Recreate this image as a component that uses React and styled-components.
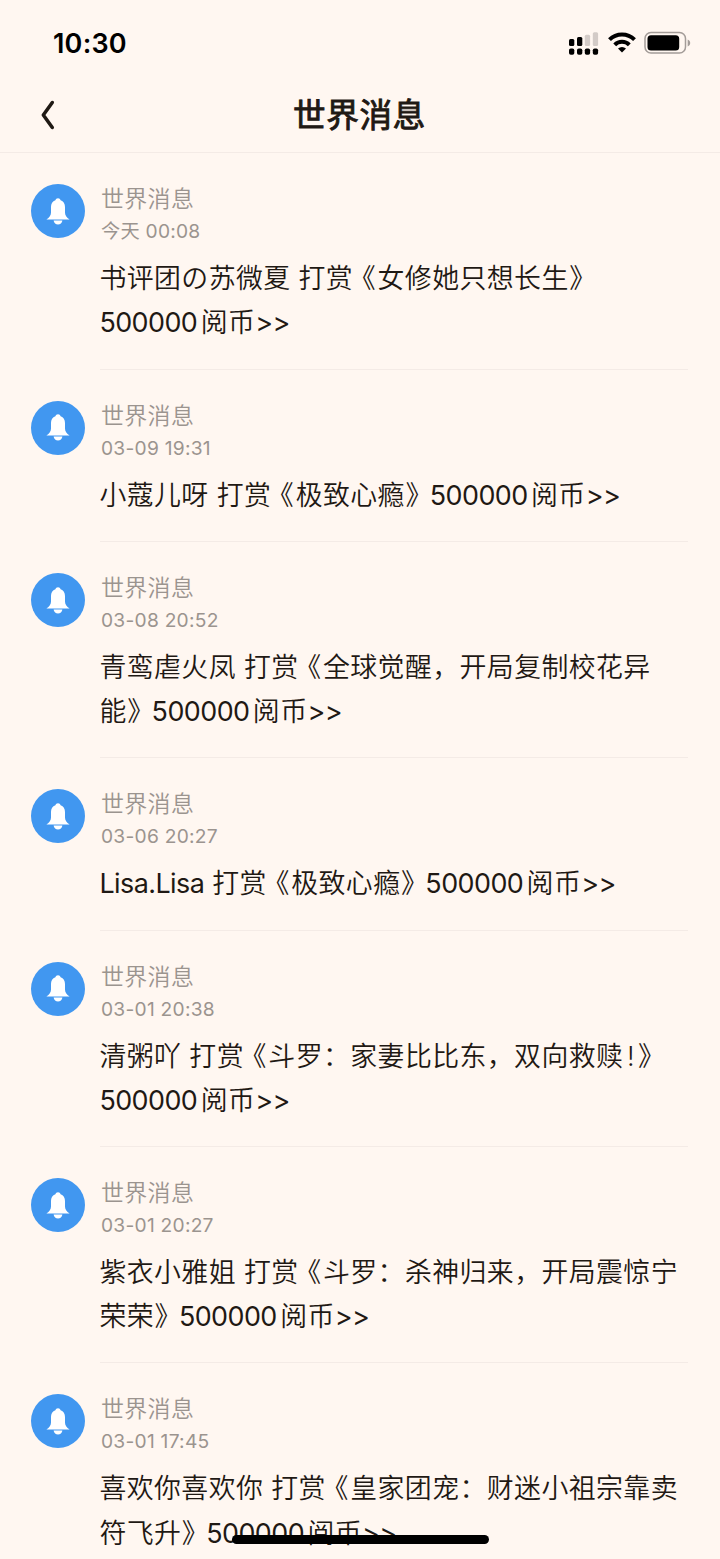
import React from "react";
import styled, { createGlobalStyle } from "styled-components";

const palette = {
  page: "#fff7f1",
  ink: "#1f1914",
  muted: "#9b948f",
  line: "#f4ebe6",
  blue: "#4197f0",
};

const GlobalStyle = createGlobalStyle`
  * {
    box-sizing: border-box;
  }

  body {
    margin: 0;
    background: ${palette.page};
    font-family: "Inter", "Noto Sans CJK SC", sans-serif;
    text-spacing-trim: space-all;
    text-autospace: no-autospace;
  }
`;

const Screen = styled.div`
  position: relative;
  width: 720px;
  height: 1559px;
  overflow: hidden;
  background: ${palette.page};
`;

const StatusBar = styled.div`
  display: flex;
  align-items: center;
  justify-content: space-between;
  height: 78px;
  padding: 8px 29px 0 53px;
`;

const Clock = styled.span`
  padding-top: 2px;
  font-size: 27px;
  font-weight: 600;
  line-height: 34px;
  letter-spacing: 0.2px;
  color: #000;
`;

const StatusIcons = styled.svg`
  display: block;
  width: 122px;
  height: 24px;
`;

const NavBar = styled.header`
  display: grid;
  grid-template-columns: 96px 1fr 96px;
  align-items: center;
  height: 75px;
  border-bottom: 1px solid ${palette.line};
`;

const BackButton = styled.button`
  display: flex;
  width: 96px;
  height: 74px;
  padding: 0 0 0 38px;
  align-items: center;
  border: 0;
  background: none;
`;

const Title = styled.h1`
  margin: 0 1px 0 0;
  font-size: 32.6px;
  font-weight: 400;
  line-height: 74px;
  letter-spacing: 0.7px;
  text-align: center;
  color: ${palette.ink};
  -webkit-text-stroke: 0.9px ${palette.ink};
`;

const List = styled.ul`
  margin: 0;
  padding: 0.4px 0 0;
  list-style: none;
`;

const Item = styled.li`
  display: flex;
  padding: 31px 32px 0 31px;
`;

const Avatar = styled.div`
  display: flex;
  flex: none;
  align-items: center;
  justify-content: center;
  width: 54px;
  height: 54px;
  margin-right: 15px;
  border-radius: 50%;
  background: ${palette.blue};
`;

const Content = styled.div`
  flex: 1;
  min-width: 0;
  border-bottom: 1px solid ${palette.line};
`;

const Name = styled.div`
  padding: 1px 0 0 1px;
  font-size: 23px;
  font-weight: 350;
  line-height: 29px;
  letter-spacing: 0.3px;
  color: ${palette.muted};
`;

const Time = styled.div`
  margin-top: 3px;
  padding-left: 1px;
  font-size: 19.2px;
  line-height: 28px;
  letter-spacing: 0.25px;
  color: ${palette.muted};
`;

const Message = styled.p`
  margin: 0 0 0 -0.6px;
  padding: 11px 0 24.2px;
  font-size: 26.9px;
  font-weight: 350;
  line-height: 44.1px;
  letter-spacing: 0.42px;
  color: ${palette.ink};
`;

const Line = styled.span`
  display: block;
  white-space: nowrap;
`;

const Latin = styled.span`
  margin-right: ${({ $gap }) => $gap || 0}px;
  font-weight: 400;
  letter-spacing: -0.55px;
`;

const Mark = styled.span`
  margin-left: ${({ $before }) => $before}px;
  margin-right: ${({ $after }) => $after || 0}px;
  font-feature-settings: "halt";
`;

const HomeIndicator = styled.div`
  position: absolute;
  left: 232px;
  top: 1535px;
  width: 257px;
  height: 9px;
  border-radius: 5px;
  background: #000;
`;

const messages = [
  { time: "今天 00:08", lines: ["书评团の苏微夏 打赏《女修她只想长生》", "500000阅币>>"] },
  { time: "03-09 19:31", lines: ["小蔻儿呀 打赏《极致心瘾》500000阅币>>"] },
  { time: "03-08 20:52", lines: ["青鸾虐火凤 打赏《全球觉醒，开局复制校花异", "能》500000阅币>>"] },
  { time: "03-06 20:27", lines: ["Lisa.Lisa 打赏《极致心瘾》500000阅币>>"] },
  { time: "03-01 20:38", lines: ["清粥吖 打赏《斗罗：家妻比比东，双向救赎!》", "500000阅币>>"] },
  { time: "03-01 20:27", lines: ["紫衣小雅姐 打赏《斗罗：杀神归来，开局震惊宁", "荣荣》500000阅币>>"] },
  { time: "03-01 17:45", lines: ["喜欢你喜欢你 打赏《皇家团宠：财迷小祖宗靠卖", "符飞升》500000阅币>>"] },
];

// tightens latin runs and book title marks against the chinese text
const renderText = (text) =>
  text.split(/([A-Za-z.]+|\d+|>>|[《》!])/).map((part, i) => {
    if (/^\d+$/.test(part)) return <Latin key={i} $gap={3.4}>{part}</Latin>;
    if (/^([A-Za-z.]+|>>)$/.test(part)) return <Latin key={i}>{part}</Latin>;
    if (part === "《") return <Mark key={i} $before={9} $after={1.5}>{part}</Mark>;
    if (part === "》") return <Mark key={i} $before={0.5} $after={10.5}>{part}</Mark>;
    if (part === "!") return <Mark key={i} $before={3.5} $after={2.5}>{part}</Mark>;
    return part;
  });

const BellIcon = () => (
  <svg width="24" height="27" viewBox="0 0 24 27" fill="#fff">
    <path d="M12 .2c1.300 0 2.300.9 2.600 2 2.900 1.100 4.400 3.500 4.400 6.800v5.500c0 2.800 1.500 4.900 4.600 7H.4c3.100-2.100 4.600-4.200 4.600-7V9c0-3.300 1.500-5.700 4.400-6.800C9.700 1.100 10.700.2 12 .2Z" />
    <path d="M7.600 22.500h8.800c-.5 2.500-2.100 4-4.400 4s-3.900-1.500-4.400-4Z" />
  </svg>
);

const Status = () => (
  <StatusIcons viewBox="0 0 122 24">
    <g fill="#000">
      <rect x="0" y="8" width="5.300" height="7" rx="1.500" />
      <rect x="8" y="6" width="5.300" height="9" rx="1.500" />
      <rect x="0" y="17.500" width="5.300" height="6.200" rx="1.800" />
      <rect x="8" y="17.500" width="5.300" height="6.200" rx="1.800" />
      <rect x="15.800" y="17.500" width="5.300" height="6.200" rx="1.800" />
      <rect x="23.800" y="17.500" width="5.300" height="6.200" rx="1.800" />
    </g>
    <g fill="#d3cbc7">
      <rect x="15.800" y="3.800" width="5.300" height="11.200" rx="1.500" />
      <rect x="23.800" y="1.200" width="5.300" height="13.800" rx="1.500" />
    </g>
    <g fill="none" stroke="#000" strokeWidth="4">
      <path d="M40.500 8.700a17.500 17.500 0 0 1 25 0" />
      <path d="M45.700 13.800a10.300 10.300 0 0 1 14.600 0" />
    </g>
    <path d="M53 21.500l-4-4a6 6 0 0 1 8 0z" fill="#000" />
    <rect x="76" y="1.500" width="40.500" height="20.500" rx="6" fill="none" stroke="#a39c98" strokeWidth="1.500" />
    <rect x="78.500" y="4.200" width="31.700" height="15.300" rx="3.500" fill="#000" />
    <path d="M118.700 8.500c1.800.7 2.500 2 2.500 3.500s-.7 2.800-2.500 3.500z" fill="#a39c98" />
  </StatusIcons>
);

const MessageItem = ({ time, lines }) => (
  <Item>
    <Avatar>
      <BellIcon />
    </Avatar>
    <Content>
      <Name>世界消息</Name>
      <Time>{time}</Time>
      <Message>
        {lines.map((line) => (
          <Line key={line}>{renderText(line)}</Line>
        ))}
      </Message>
    </Content>
  </Item>
);

const App = () => {
  return (
    <Screen>
      <GlobalStyle />
      <StatusBar>
        <Clock>10:30</Clock>
        <Status />
      </StatusBar>
      <NavBar>
        <BackButton aria-label="返回">
          <svg width="20" height="30" viewBox="0 0 20 30" fill="none" stroke={palette.ink} strokeWidth="3.500">
            <path d="M14.300 2.500 5.300 15l9 12.500" strokeLinecap="round" strokeLinejoin="round" />
          </svg>
        </BackButton>
        <Title>世界消息</Title>
      </NavBar>
      <List>
        {messages.map((message) => (
          <MessageItem key={message.time} {...message} />
        ))}
      </List>
      <HomeIndicator />
    </Screen>
  );
};

export default App;
